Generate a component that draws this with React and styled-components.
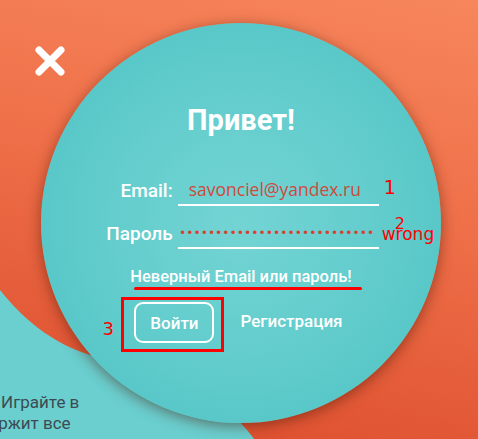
import React from "react";
import styled, { createGlobalStyle } from "styled-components";

const GlobalStyle = createGlobalStyle`
  html, body {
    margin: 0;
    height: 100%;
  }
  body {
    font-family: Roboto, "Noto Sans", sans-serif;
    overflow: hidden;
  }
  #root {
    height: 100%;
  }
`;

const App = () => {
  return (
    <>
      <GlobalStyle />
      <Page>
        <Backdrop viewBox="0 0 478 439" preserveAspectRatio="none">
          <path
            d="M0 290 C 20 315 50 345 100 358 S 225 390 258 445 L 0 445 Z"
            fill="#6bcfcf"
          />
        </Backdrop>

        <Teaser>
          <TeaserLine $shift={1}>Играйте в</TeaserLine>
          <TeaserLine $shift={-21}>держит все</TeaserLine>
        </Teaser>

        <Overlay>
          <CloseButton type="button" aria-label="Закрыть">
            <svg width="30" height="30" viewBox="0 0 30 30">
              <path
                d="M4 4 L26 26 M26 4 L4 26"
                stroke="#fff"
                strokeWidth="7"
                strokeLinecap="round"
              />
            </svg>
          </CloseButton>

          <Modal onSubmit={(e) => e.preventDefault()}>
            <Title>Привет!</Title>

            <Fields>
              <Label htmlFor="email">Email:</Label>
              <InputWrap>
                <Input id="email" defaultValue="savonciel@yandex.ru" />
                <Note $left={5} $top={2} $size={19}>
                  1
                </Note>
              </InputWrap>

              <Label htmlFor="password">Пароль</Label>
              <InputWrap>
                <Input
                  id="password"
                  type="password"
                  $secret
                  defaultValue={"x".repeat(27)}
                />
                <Note $left={16} $top={-3} $size={16}>
                  2
                </Note>
                <Note $left={3} $top={7} $size={17}>
                  wrong
                </Note>
              </InputWrap>
            </Fields>

            <ErrorText>Неверный Email или пароль!</ErrorText>

            <Actions>
              <Highlight>
                <Note $left={-32} $top={18} $size={18} $before>
                  3
                </Note>
                <SubmitButton type="submit">Войти</SubmitButton>
              </Highlight>
              <RegLink href="#">Регистрация</RegLink>
            </Actions>
          </Modal>
        </Overlay>
      </Page>
    </>
  );
};

export default App;

const Page = styled.div`
  display: grid;
  width: 100%;
  height: 100%;
  overflow: hidden;
  background: linear-gradient(192deg, #f7865c 0%, #ef714a 40%, #dc4c2c 100%);

  > * {
    grid-area: 1 / 1;
  }
`;

const Backdrop = styled.svg`
  width: 100%;
  height: 100%;
  display: block;
`;

const Teaser = styled.div`
  align-self: end;
  padding-bottom: 5px;
  font-size: 17px;
  line-height: 21px;
  color: #3c4b53;
`;

const TeaserLine = styled.div`
  margin-left: ${(p) => p.$shift}px;
  white-space: nowrap;
`;

const Overlay = styled.div`
  position: relative;
  display: flex;
  align-items: center;
  justify-content: center;
  padding: 7px 0 0 4px;
`;

const CloseButton = styled.button`
  position: absolute;
  left: 35px;
  top: 46px;
  width: 30px;
  height: 30px;
  padding: 0;
  border: none;
  background: none;
  cursor: pointer;

  svg {
    display: block;
  }
`;

const Modal = styled.form`
  width: 400px;
  height: 400px;
  box-sizing: border-box;
  border-radius: 50%;
  padding-top: 80px;
  display: flex;
  flex-direction: column;
  align-items: center;
  color: #fff;
  background: radial-gradient(
    circle at 50% 50%,
    #74d4d4 0%,
    #60cbcb 55%,
    #4bc1c2 100%
  );
  box-shadow: 0 3px 14px rgba(70, 20, 5, 0.5);
`;

const Title = styled.h1`
  margin: 0;
  font-size: 29px;
  font-weight: 700;
`;

const Fields = styled.div`
  display: grid;
  grid-template-columns: auto 201px;
  column-gap: 5px;
  row-gap: 11px;
  align-items: center;
  margin: 37px 0 0 3px;
`;

const Label = styled.label`
  text-align: right;
  font-size: 19px;
  font-weight: 500;
`;

const InputWrap = styled.div`
  position: relative;
`;

const Input = styled.input`
  display: block;
  width: 100%;
  height: 32px;
  box-sizing: border-box;
  margin: 0;
  border: none;
  border-bottom: 2px solid #fff;
  background: transparent;
  outline: none;
  padding: 0 0 0 ${(p) => (p.$secret ? 2 : 11)}px;
  font-family: ${(p) => (p.$secret ? "inherit" : '"Open Sans", sans-serif')};
  font-size: ${(p) => (p.$secret ? 17 : 17.5)}px;
  letter-spacing: ${(p) => (p.$secret ? "1.5px" : "0")};
  color: ${(p) => (p.$secret ? "#d9402f" : "#cf4a3c")};
`;

const Note = styled.span`
  position: absolute;
  ${(p) => (p.$before ? "" : "left: 100%;")}
  margin-left: ${(p) => p.$left}px;
  top: ${(p) => p.$top}px;
  font-family: "DejaVu Sans", sans-serif;
  font-size: ${(p) => p.$size}px;
  color: #ff0000;
  white-space: nowrap;
`;

const ErrorText = styled.p`
  position: relative;
  margin: 18px 0 0;
  font-size: 16.5px;
  font-weight: 500;

  &::after {
    content: "";
    position: absolute;
    left: 4px;
    right: -10px;
    bottom: -4px;
    height: 3px;
    border-radius: 2px;
    background: #ff0000;
  }
`;

const Actions = styled.div`
  display: flex;
  align-items: center;
  gap: 16px;
  margin-top: 11px;
  padding-right: 18px;
`;

const Highlight = styled.div`
  position: relative;
  border: 3px solid #f00;
  padding: 2px 7px 6px 10px;
`;

const SubmitButton = styled.button`
  display: block;
  width: 80px;
  height: 41px;
  border: 2px solid #fff;
  border-radius: 9px;
  background: transparent;
  color: #fff;
  font-family: inherit;
  font-size: 17px;
  font-weight: 500;
  cursor: pointer;
`;

const RegLink = styled.a`
  margin-bottom: 8px;
  color: #fff;
  text-decoration: none;
  font-size: 17px;
  font-weight: 500;
`;
